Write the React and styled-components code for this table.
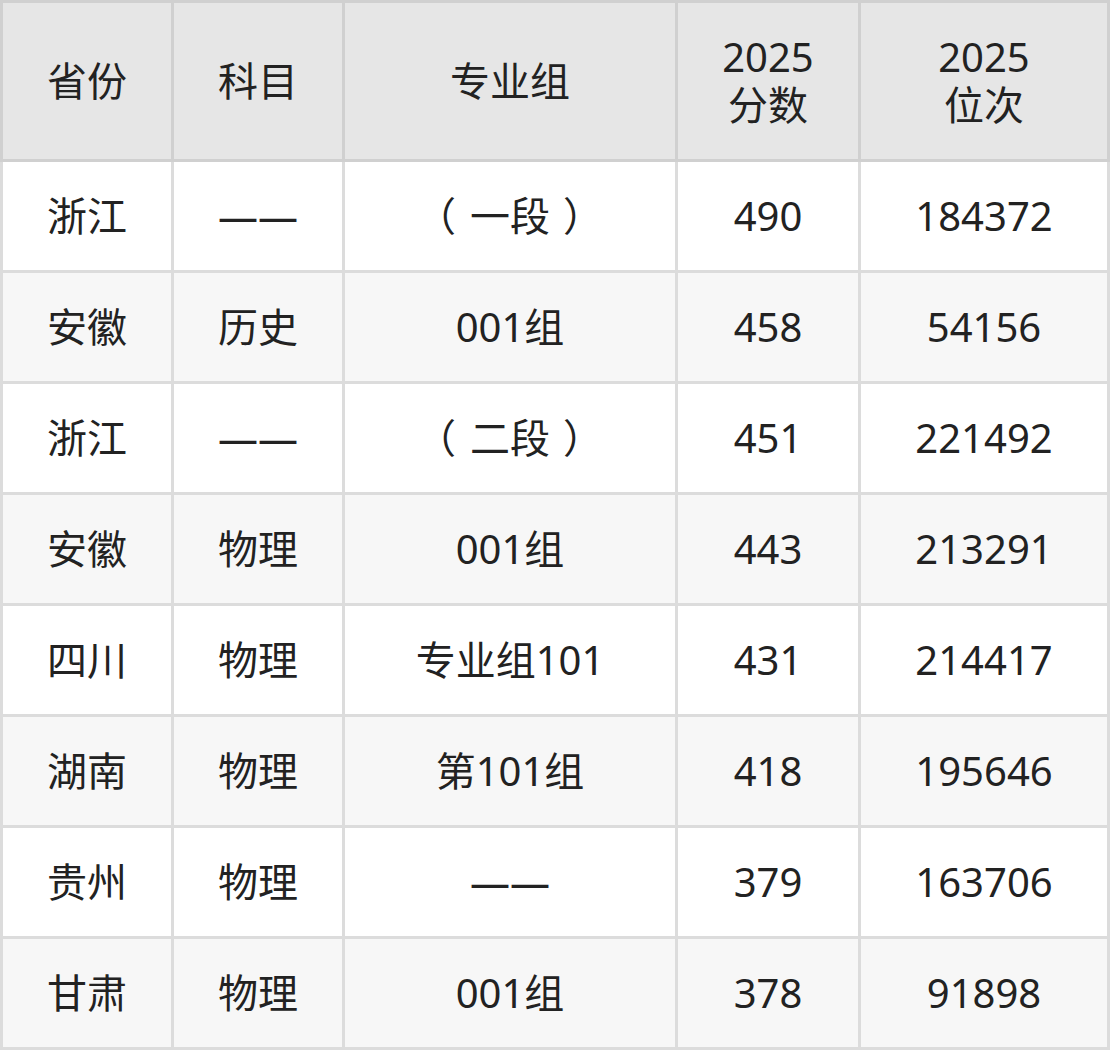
import styled, { createGlobalStyle } from "styled-components";

const GlobalStyle = createGlobalStyle`
  body {
    margin: 0;
    background: #ffffff;
    font-family: "Noto Sans", "Noto Sans CJK SC", sans-serif;
  }
`;

const Table = styled.table`
  width: 1110px;
  border-collapse: separate;
  border-spacing: 0;
  table-layout: fixed;
  color: #222222;
  font-size: 40px;
  line-height: 48px;
`;

const Col = styled.col`
  width: ${(props) => props.$w}px;
`;

const Th = styled.th`
  height: 156px;
  padding: 0;
  font-weight: 400;
  text-align: center;
  vertical-align: middle;
  background: #e6e6e6;
  border-top: 3px solid #d0d0d0;
  border-right: 3px solid #d0d0d0;
  border-bottom: 3px solid #d0d0d0;
  &:first-child {
    border-left: 3px solid #d0d0d0;
  }
`;

const Row = styled.tr`
  background: ${(props) => (props.$alt ? "#f7f7f7" : "#ffffff")};
`;

const Td = styled.td`
  height: 108px;
  padding: 0;
  text-align: center;
  vertical-align: middle;
  border-right: 3px solid #dcdcdc;
  border-bottom: 3px solid #dcdcdc;
  &:first-child {
    border-left: 3px solid #dcdcdc;
  }
`;

// the installed font sets full-width brackets to the side of their box;
// the reference has them nearer the middle, as the SC glyphs are
const Paren = styled.span`
  display: inline-block;
  width: 1em;
  box-sizing: border-box;
  text-align: left;
  text-indent: ${(props) => (props.$open ? "-14px" : "0")};
  padding-left: ${(props) => (props.$open ? "0" : "13px")};
`;

const widths = [174, 171, 333, 183, 249];

const rows = [
  ["浙江", "——", "（一段）", "490", "184372"],
  ["安徽", "历史", "001组", "458", "54156"],
  ["浙江", "——", "（二段）", "451", "221492"],
  ["安徽", "物理", "001组", "443", "213291"],
  ["四川", "物理", "专业组101", "431", "214417"],
  ["湖南", "物理", "第101组", "418", "195646"],
  ["贵州", "物理", "——", "379", "163706"],
  ["甘肃", "物理", "001组", "378", "91898"],
];

const renderCell = (c) => {
  if (!c.startsWith("（")) return c;
  return (
    <>
      <Paren $open>（</Paren>
      {c.slice(1, -1)}
      <Paren>）</Paren>
    </>
  );
};

const App = () => {
  return (
    <>
      <GlobalStyle />
      <Table lang="zh-CN">
        <colgroup>
          {widths.map((w, i) => (
            <Col key={i} $w={w} />
          ))}
        </colgroup>
        <thead>
          <tr>
            <Th>省份</Th>
            <Th>科目</Th>
            <Th>专业组</Th>
            <Th>
              2025
              <br />
              分数
            </Th>
            <Th>
              2025
              <br />
              位次
            </Th>
          </tr>
        </thead>
        <tbody>
          {rows.map((r, i) => (
            <Row key={i} $alt={i % 2 === 1}>
              {r.map((c, j) => (
                <Td key={j}>{renderCell(c)}</Td>
              ))}
            </Row>
          ))}
        </tbody>
      </Table>
    </>
  );
};

export default App;
